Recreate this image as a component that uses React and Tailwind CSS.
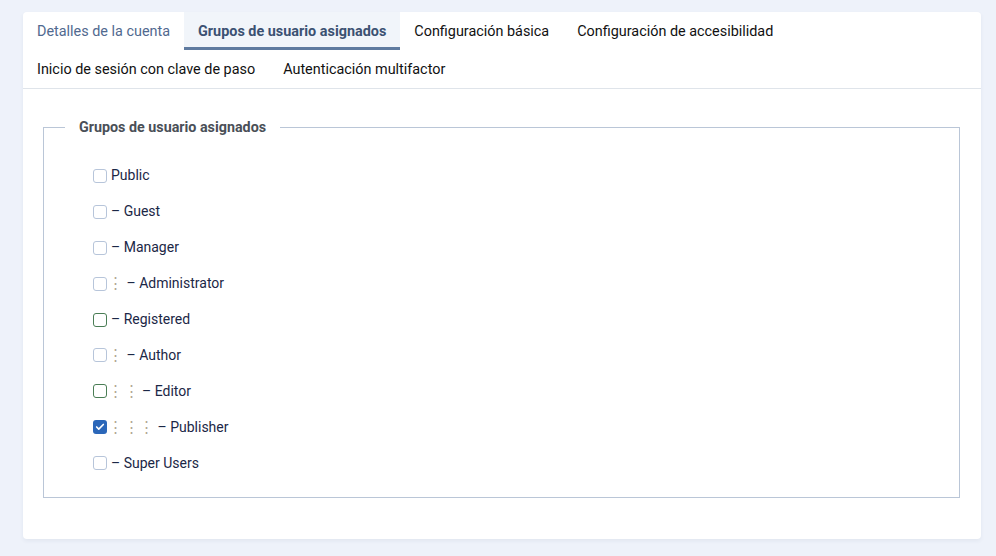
import { Check } from "lucide-react";

const groups = [
  { name: "Public", level: 0, root: true },
  { name: "Guest", level: 0 },
  { name: "Manager", level: 0 },
  { name: "Administrator", level: 1 },
  { name: "Registered", level: 0, state: "green" },
  { name: "Author", level: 1 },
  { name: "Editor", level: 2, state: "green" },
  { name: "Publisher", level: 3, state: "checked" },
  { name: "Super Users", level: 0 },
];

const Box = ({ state }) => {
  if (state === "checked") {
    return (
      <span className="w-[14px] h-[14px] rounded-[3px] bg-[#2b67b9] flex items-center justify-center">
        <Check size={10} strokeWidth={4} className="text-white" />
      </span>
    );
  }
  return (
    <span
      className={`w-[14px] h-[14px] rounded-[3px] bg-white border ${
        state === "green" ? "border-[#4a7d55]" : "border-[#b7c5da]"
      }`}
    />
  );
};

const Tab = ({ label, active, muted }) => (
  <div
    className={`h-[38px] flex items-center px-[14px] pt-[4px] border-b-[3px] ${
      active
        ? "bg-[#f1f5fa] border-[#5f7ba0] font-bold text-[#3b5172]"
        : "border-transparent"
    } ${muted ? "text-[#51698f]" : ""} ${!active && !muted ? "text-[#111]" : ""}`}
  >
    {label}
  </div>
);

export default function App() {
  return (
    <div className="min-h-screen bg-[#eef2fa] pt-3 px-[23px] pr-[15px] font-['Roboto',sans-serif] text-[14px]">
      <div className="bg-white rounded-[4px] shadow-[0_2px_4px_rgba(30,50,90,0.06)] pb-[41px]">
        {/* tabs */}
        <div className="border-b border-[#dfe4ea] text-[14.4px]">
          <div className="flex">
            <Tab label="Detalles de la cuenta" muted />
            <Tab label="Grupos de usuario asignados" active />
            <Tab label="Configuración básica" />
            <Tab label="Configuración de accesibilidad" />
          </div>
          <div className="flex">
            <Tab label="Inicio de sesión con clave de paso" />
            <Tab label="Autenticación multifactor" />
          </div>
        </div>

        {/* fieldset */}
        <div className="px-5 pt-[28px]">
          <fieldset className="border border-[#bac6d7] mr-px pb-[16px]">
            <legend className="ml-[21px] px-[14px] font-bold text-[#4a4f57] leading-5 text-[14.3px]">
              Grupos de usuario asignados
            </legend>
            <div className="pl-[49px] pt-[21px] flex flex-col text-[#1b2746]">
              {groups.map((g) => (
                <div key={g.name} className="h-[35.9px] flex items-center">
                  <Box state={g.state} />
                  <span className="ml-1 flex items-center">
                    {Array.from({ length: g.level }).map((_, i) => (
                      <span key={i} className="w-[15.5px] flex">
                        <span className="-ml-[3px] text-[#b3a794] text-[15px] leading-none">⋮</span>
                      </span>
                    ))}
                    <span>{g.root ? g.name : `– ${g.name}`}</span>
                  </span>
                </div>
              ))}
            </div>
          </fieldset>
        </div>
      </div>
    </div>
  );
}
